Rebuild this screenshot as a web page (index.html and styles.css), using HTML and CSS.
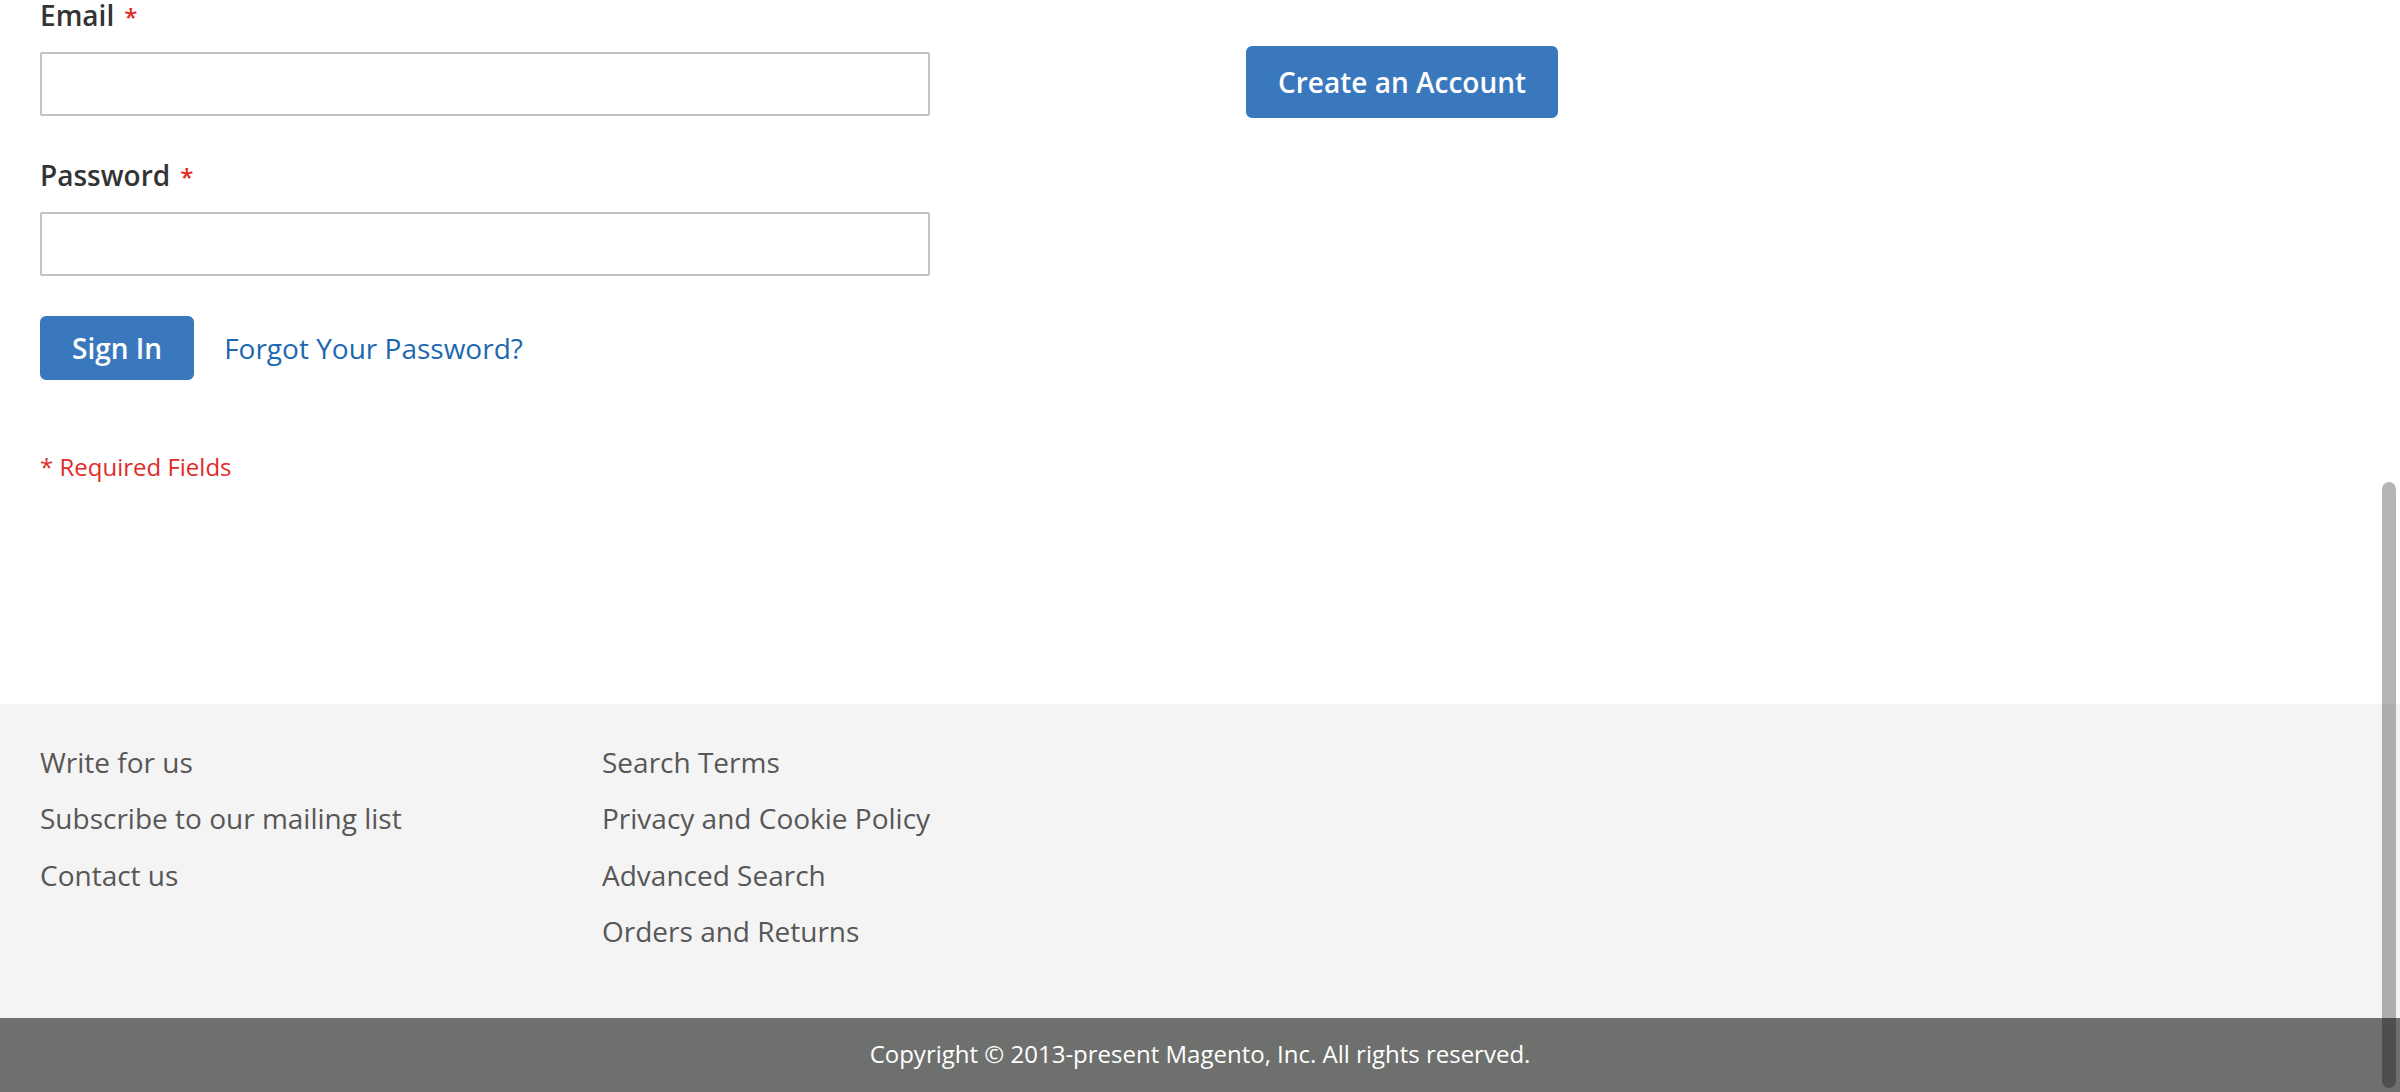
FILE: index.html
```html
<!DOCTYPE html>
<html lang="en">
<head>
<meta charset="utf-8">
<title>Customer Login</title>
<link rel="stylesheet" href="styles.css">
</head>
<body>
<main class="page">
  <div class="login">
    <form class="login-form">
      <div class="fieldset">
        <div class="field">
          <label class="label required" for="email">Email</label>
          <input class="input" id="email" type="email">
        </div>
        <div class="field">
          <label class="label required" for="pass">Password</label>
          <input class="input" id="pass" type="password">
        </div>
      </div>
      <div class="actions">
        <button class="btn" type="button">Sign In</button>
        <a class="link" href="#">Forgot Your Password?</a>
      </div>
      <div class="req-note">* Required Fields</div>
    </form>
    <div class="new-customer">
      <a class="btn btn-create" href="#">Create an Account</a>
    </div>
  </div>
</main>
<footer class="footer">
  <div class="footer-links">
    <ul class="links">
      <li><a href="#">Write for us</a></li>
      <li><a href="#">Subscribe to our mailing list</a></li>
      <li><a href="#">Contact us</a></li>
    </ul>
    <ul class="links">
      <li><a href="#">Search Terms</a></li>
      <li><a href="#">Privacy and Cookie Policy</a></li>
      <li><a href="#">Advanced Search</a></li>
      <li><a href="#">Orders and Returns</a></li>
    </ul>
  </div>
  <div class="copyright">Copyright © 2013-present Magento, Inc. All rights reserved.</div>
</footer>
<div class="scroll-thumb"></div>
</body>
</html>
```
FILE: styles.css
```css
html, body {
  margin: 0;
  padding: 0;
  overflow: hidden;
  height: 100%;
}
body {
  font-family: "Open Sans", "Liberation Sans", sans-serif;
  color: #333333;
  background: #ffffff;
  position: relative;
}
.page {
  height: 704px;
  box-sizing: border-box;
}
.login {
  display: grid;
  grid-template-columns: 890px 312px;
  column-gap: 316px;
  padding: 0 40px;
}
.fieldset {
  display: flex;
  flex-direction: column;
  gap: 44px;
}
.label {
  display: block;
  height: 30px;
  font-size: 28px;
  line-height: 30px;
  font-weight: 600;
  color: #333333;
  margin-bottom: 22px;
}
.label.required::after {
  content: "*";
  color: #e02b27;
  font-size: 24px;
  line-height: 0;
  margin-left: 10px;
}
.input {
  display: block;
  width: 890px;
  height: 64px;
  box-sizing: border-box;
  border: 2px solid #c2c2c2;
  border-radius: 2px;
  background: #ffffff;
  margin: 0;
}
.actions {
  display: flex;
  align-items: center;
  gap: 30px;
  margin-top: 40px;
}
.btn {
  display: inline-block;
  font-family: inherit;
  font-size: 28px;
  line-height: 32px;
  font-weight: 600;
  color: #ffffff;
  background: #3a78bd;
  border: 2px solid #3a78bd;
  border-radius: 6px;
  padding: 14px 30px;
  text-decoration: none;
  box-sizing: border-box;
}
.link {
  font-size: 28px;
  line-height: 36px;
  color: #1d68b0;
  text-decoration: none;
}
.req-note {
  margin-top: 70px;
  font-size: 24px;
  line-height: 34px;
  color: #e02b27;
}
.new-customer {
  padding-top: 46px;
}
.btn-create {
  line-height: 40px;
  padding: 14px 30px;
  white-space: nowrap;
}
.footer-links {
  background: #f4f4f4;
  height: 314px;
  box-sizing: border-box;
  padding: 30px 40px 0;
  display: grid;
  grid-template-columns: 562px auto;
}
.links {
  list-style: none;
  margin: 0;
  padding: 0;
}
.links li {
  font-size: 28px;
  line-height: 56.3px;
}
.links a {
  color: #575757;
  text-decoration: none;
}
.copyright {
  background: #6e706d;
  color: #ffffff;
  font-size: 24px;
  line-height: 32px;
  padding: 20px 0 22px;
  text-align: center;
}
.scroll-thumb {
  position: absolute;
  left: 2382px;
  top: 482px;
  width: 14px;
  height: 606px;
  border-radius: 7px;
  background: rgba(0, 0, 0, 0.29);
}
```
